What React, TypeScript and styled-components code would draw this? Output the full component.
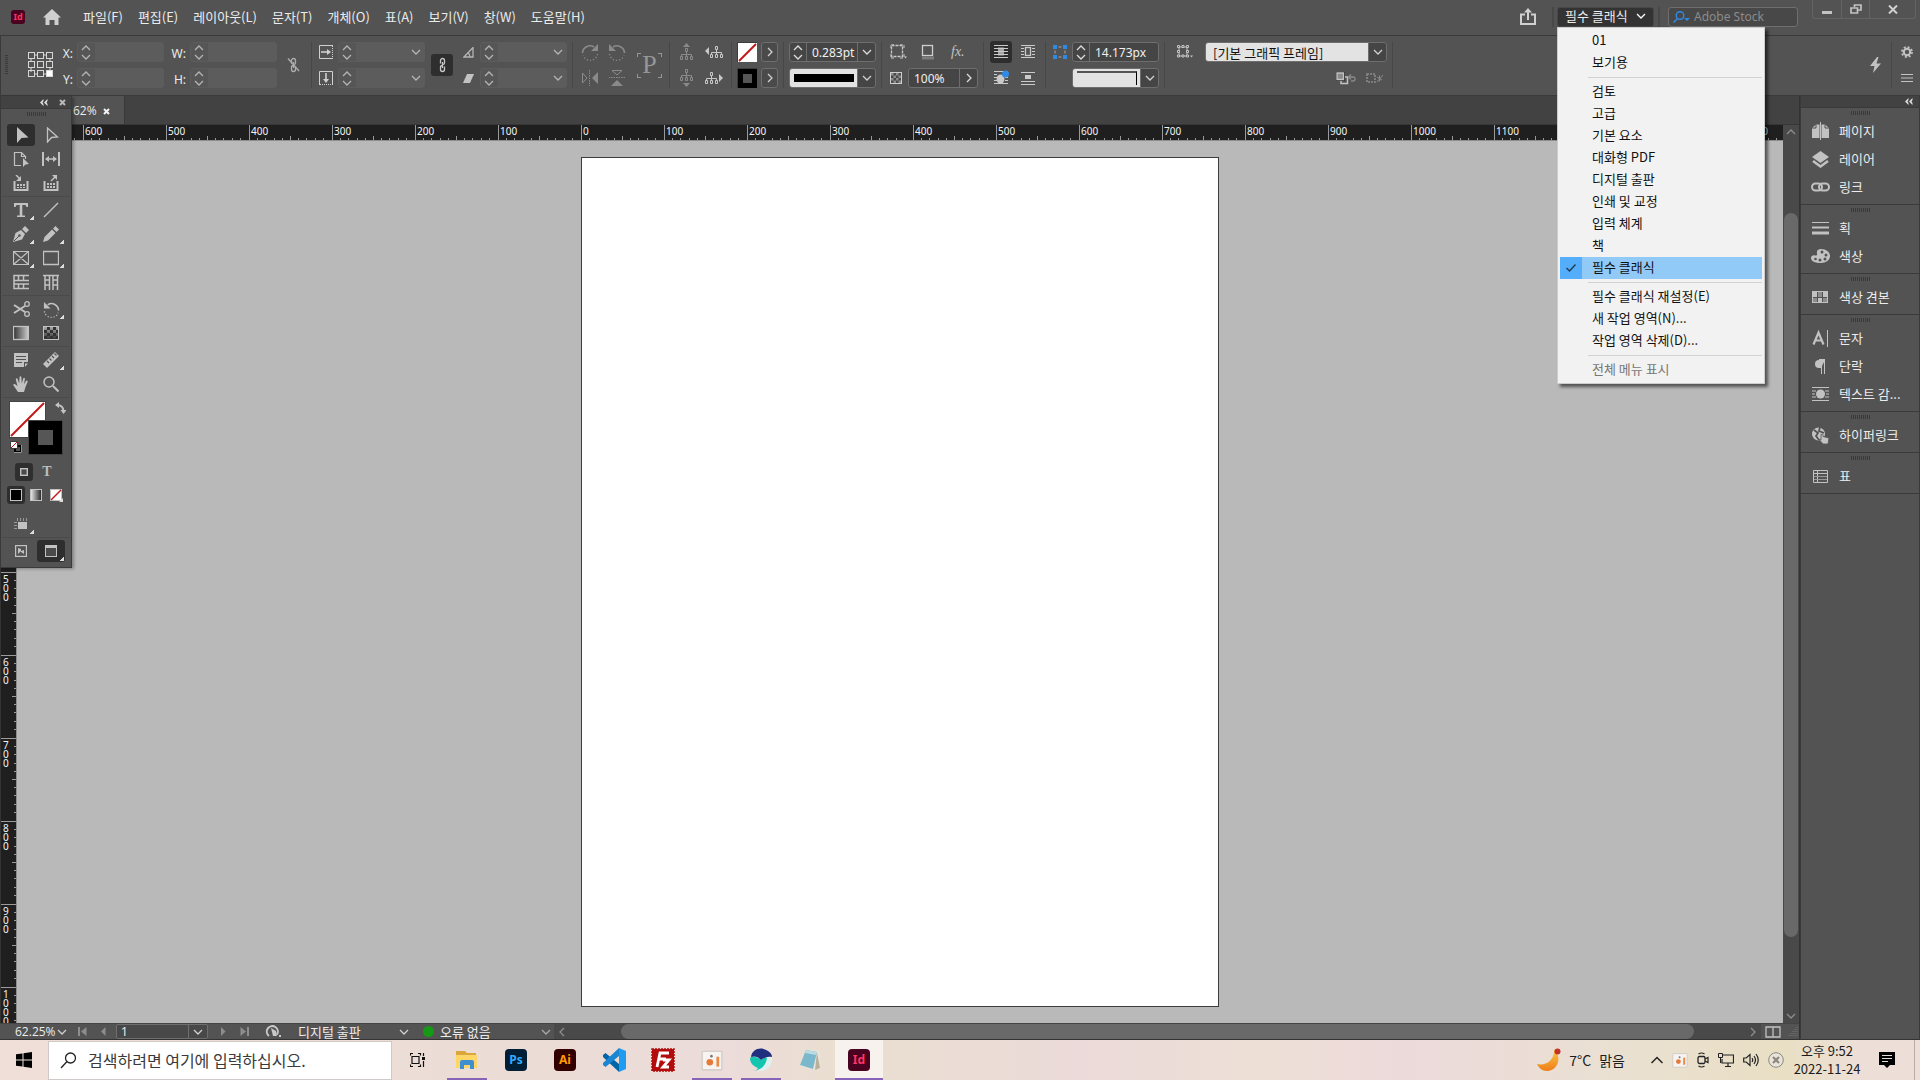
import React from "react";
import styled, { createGlobalStyle } from "styled-components";

const latin = `"Noto Sans", "Noto Sans CJK KR", sans-serif`;
const hangul = `"Noto Sans CJK KR", "Noto Sans", sans-serif`;

const c = {
  panel: "#535353",
  dark: "#424242",
  line: "#3a3a3a",
  soft: "#484848",
  field: "#454545",
  edge: "#6e6e6e",
  off: "#5c5c5c",
  text: "#ececec",
  icon: "#c2c2c2",
  dim: "#8a8a8a",
  pressed: "#2e2e2e",
  blue: "#2f8ae5",
};

const Global = createGlobalStyle`
  *, *::before, *::after { box-sizing: border-box; }
  html, body { margin: 0; overflow: hidden; }
  body { font: 13px/20px ${hangul}; color: ${c.text}; background: ${c.panel}; }
  button, input, select { font: inherit; color: inherit; margin: 0; padding: 0; border: 0; background: none; border-radius: 0; min-width: 0; outline: none; }
  button { display: inline-flex; align-items: center; justify-content: center; }
  select { appearance: none; }
  svg { display: block; flex: none; }
  ul { list-style: none; margin: 0; padding: 0; }
`;

/* ---------- icons ---------- */

type IconProps = { w?: number; h?: number; box?: string; color?: string; children: React.ReactNode };
const Icon = ({ w = 16, h = 16, box, color = c.icon, children }: IconProps) => (
  <svg width={w} height={h} viewBox={box ?? `0 0 ${w} ${h}`} fill="none" stroke={color} color={color} aria-hidden="true">
    {children}
  </svg>
);
const solid = { fill: "currentColor", stroke: "none" };

const Chevron = ({ dir = "down", color = "#d0d0d0" }: { dir?: string; color?: string }) => {
  const d: Record<string, string> = {
    down: "M1 3l4 4 4-4",
    up: "M1 7l4-4 4 4",
    right: "M3 1l4 4-4 4",
    left: "M7 1L3 5l4 4",
  };
  return (
    <Icon w={10} h={10} color={color}>
      <path d={d[dir]} strokeWidth="1.3" />
    </Icon>
  );
};

const DoubleLeft = () => (
  <Icon w={8} h={7} color="#dcdcdc">
    <path d="M3.5 0L0 3.5 3.5 7V5L2.5 3.5l1-1.500zM7.500 0L4 3.500 7.500 7V5l-1-1.500 1-1.500z" {...solid} />
  </Icon>
);

const Cross = ({ color = "#e0e0e0" }: { color?: string }) => (
  <Icon w={7} h={7} color={color}>
    <path d="M1 1l5 5M6 1L1 6" strokeWidth="2" />
  </Icon>
);

const RefGrid = () => (
  <Icon w={25} h={26} color="#d6d6d6">
    <path d="M6 3h4M15 3h4M3 6v4M3 15v5M22 6v4M22 15v5M6 22h4M15 22h4" />
    {[0, 1, 2].map((r) =>
      [0, 1, 2].map((k) => (
        <rect key={`${r}${k}`} x={0.5 + k * 9} y={0.5 + r * 9} width="6" height="6" fill={r === 2 && k === 2 ? "#fff" : "none"} />
      ))
    )}
  </Icon>
);

const Tree = ({ way, color }: { way: "up" | "down" | "left" | "right"; color: string }) => {
  const side = way === "left" || way === "right";
  const x = way === "left" ? 5 : 0;
  const y = way === "up" ? 5 : way === "down" ? 0 : 3;
  const arrow = { up: "M3 4h7L6.500 0z", down: "M3 14h7l-3.500 4z", left: "M4 4v8L0 8z", right: "M14 5v8l4-4z" }[way];
  return (
    <Icon w={side ? 18 : 13} h={18} color={color}>
      <g transform={`translate(${x} ${y})`}>
        <path d="M5.500.5h2v3h-2zM.5 8.500h2v3h-2zM5.500 8.500h2v3h-2zM10.500 8.500h2v3h-2zM6.500 4v4M1.500 8V6.500h10V8" />
      </g>
      <path d={arrow} {...solid} />
    </Icon>
  );
};

const Rotate = ({ flip, color = c.dim, size = 18 }: { flip?: boolean; color?: string; size?: number }) => (
  <Icon w={size} h={size} box="0 0 18 18" color={color}>
    <g transform={flip ? "translate(18 0) scale(-1 1)" : undefined}>
      <path d="M1.500 10A7.500 7.500 0 0 1 13 4" strokeWidth="1.600" />
      <path d="M17 1v7h-7z" {...solid} />
      <path d="M16.500 11A7.500 7.500 0 0 1 2 12.500" strokeWidth="1.400" strokeDasharray="1.200 2" />
    </g>
  </Icon>
);

const Mirror = ({ vertical }: { vertical?: boolean }) => (
  <Icon w={18} h={18} color={c.dim}>
    <g transform={vertical ? "rotate(90 9 9)" : undefined}>
      <path d="M1.500 4v10L6 9z" />
      <path d="M17 3v12l-6-6z" {...solid} />
      <path d="M8.500 1v16" strokeDasharray="1.500 1" />
    </g>
  </Icon>
);

const Wrap = ({ kind }: { kind: "none" | "box" | "shape" | "jump" }) => (
  <Icon w={16} h={16} color="#cacaca">
    {kind === "jump" ? (
      <>
        <path d="M1 2.500h14M1 11.500h14M1 14.500h14" />
        <path d="M5 5h6v4H5z" {...solid} />
      </>
    ) : (
      <>
        <path d="M1 1.500h14M1 13.500h14" />
        <path d={kind === "none" ? "M1 4.500h14M1 7.500h14M1 10.500h14" : "M1 4.500h3M1 7.500h3M1 10.500h3M12 4.500h3M12 7.500h3M12 10.500h3"} />
      </>
    )}
    {kind === "none" && <path d="M5 3.500h6v8H5z" fill="#a8a8a8" stroke="none" />}
    {kind === "none" && <path d="M1 4.500h14M1 7.500h14M1 10.500h14" />}
    {kind === "box" && <rect x="5.500" y="3.500" width="5" height="8" strokeWidth="1.300" />}
    {kind === "shape" && (
      <>
        <ellipse cx="7.500" cy="9" rx="4" ry="4.500" {...solid} />
        <circle cx="12.500" cy="4" r="3.500" fill={c.blue} stroke="none" />
      </>
    )}
  </Icon>
);

const Chain = ({ broken, color = "#c8c8c8" }: { broken?: boolean; color?: string }) => (
  <Icon w={13} h={16} color={color}>
    <path d="M4.500 6.500V3.500a2 2 0 0 1 4 0V6q0 1.500-2 1.500M8.500 9.500v3a2 2 0 0 1-4 0V10q0-1.500 2-1.500M6.500 5v6" strokeWidth="1.300" />
    {broken && <path d="M1 1.500l11 12.500" strokeWidth="1.300" />}
  </Icon>
);

const Checker = ({ size = 12 }: { size?: number }) => (
  <Icon w={size} h={size} box="0 0 12 12" color="#cfcfcf">
    <rect x=".5" y=".5" width="11" height="11" fill="#4a4a4a" />
    <path d="M1 1h2.500v2.500H1zM6 1h2.500v2.500H6zM3.500 3.500H6V6H3.500zM8.500 3.500H11V6H8.500zM1 6h2.500v2.500H1zM6 6h2.500v2.500H6zM3.500 8.500H6V11H3.500zM8.500 8.500H11V11H8.500z" fill="#8c8c8c" stroke="none" />
  </Icon>
);

const NoneSwatch = ({ size, line = 1.5 }: { size: number; line?: number }) => (
  <svg width={size} height={size} viewBox={`0 0 ${size} ${size}`} aria-hidden="true">
    <rect width={size} height={size} fill="#fff" />
    <path d={`M1 ${size - 1}L${size - 1} 1`} stroke="#c31717" strokeWidth={line} />
  </svg>
);

const StrokeSwatch = ({ size, hole }: { size: number; hole: number }) => (
  <svg width={size} height={size} viewBox={`0 0 ${size} ${size}`} aria-hidden="true">
    <rect width={size} height={size} fill="#000" />
    <rect x={(size - hole) / 2} y={(size - hole) / 2} width={hole} height={hole} fill="#565656" />
  </svg>
);

const AdobeBadge = ({ label, bg, fg, size = 18 }: { label: string; bg: string; fg: string; size?: number }) => (
  <Badge $bg={bg} $fg={fg} $size={size}>
    {label}
  </Badge>
);
const Badge = styled.span<{ $bg: string; $fg: string; $size: number }>`
  display: inline-flex;
  align-items: center;
  justify-content: center;
  flex: none;
  width: ${(p) => p.$size}px;
  height: ${(p) => p.$size}px;
  border-radius: ${(p) => (p.$size > 18 ? 4 : 3)}px;
  background: ${(p) => p.$bg};
  color: ${(p) => p.$fg};
  font: 700 ${(p) => (p.$size > 18 ? 12 : 9)}px/1 ${latin};
`;

/* ---------- menu bar ---------- */

const Screen = styled.div`
  display: flex;
  flex-direction: column;
  height: 100vh;
  background: ${c.panel};
`;
const MenuBar = styled.header`
  display: flex;
  align-items: center;
  height: 36px;
  flex: none;
  padding: 0 4px 2px 11px;
  border-bottom: 1px solid ${c.line};
`;
const HomeButton = styled.button`
  margin: 0 22px 0 18px;
`;
const Menus = styled.nav`
  display: flex;
  gap: 15px;
  flex: 1;
`;
const MenuButton = styled.button`
  line-height: 20px;
  white-space: nowrap;
`;
const Divider = styled.span`
  width: 2px;
  height: 20px;
  background: ${c.soft};
`;
const Workspace = styled.div`
  position: relative;
  margin: 0 4px 0 3px;
`;
const WorkspaceButton = styled.button`
  width: 97px;
  height: 20px;
  justify-content: space-between;
  padding: 0 7px 2px 7px;
  border-radius: 3px;
  background: #333;
  border: 1px solid #474747;
  line-height: 16px;
  white-space: nowrap;
`;
const SearchBox = styled.label`
  display: flex;
  align-items: center;
  gap: 4px;
  width: 130px;
  height: 20px;
  margin: 0 14px 0 8px;
  padding-left: 4px;
  border: 1px solid ${c.edge};
  border-radius: 3px;
  background: #484848;
  input {
    flex: 1;
    font: 12px/16px ${latin};
    &::placeholder { color: #8b8b8b; opacity: 1; }
  }
`;
const WindowButtons = styled.div`
  display: flex;
  align-self: flex-start;
  height: 19px;
  border: 1px solid #646464;
  border-top: 0;
  border-radius: 0 0 3px 3px;
  button { width: 28px; }
  button + button { border-left: 1px solid #646464; }
  button:last-child { width: 46px; }
`;

/* ---------- workspace menu ---------- */

const Popup = styled.ul`
  position: absolute;
  z-index: 20;
  top: 21px;
  left: 0;
  width: 208px;
  padding: 2px;
  border: 1px solid #ccc;
  background: #f2f2f2;
  box-shadow: 3px 3px 3px rgba(0, 0, 0, 0.55);
  color: #111;
`;
const PopupItem = styled.li`
  height: 22px;
`;
const PopupButton = styled.button<{ $on?: boolean; $faded?: boolean }>`
  display: grid;
  grid-template-columns: 22px 1fr;
  justify-content: stretch;
  align-items: start;
  width: 100%;
  height: 22px;
  gap: 10px;
  text-align: left;
  line-height: 20px;
  white-space: nowrap;
  color: ${(p) => (p.$faded ? "#777" : "#111")};
  background: ${(p) => (p.$on ? "#91c9f7" : "none")};
`;
const CheckCell = styled.span<{ $on?: boolean }>`
  display: flex;
  align-items: center;
  justify-content: center;
  height: 22px;
  background: ${(p) => (p.$on ? "#55aefb" : "none")};
`;
const PopupLine = styled.li`
  height: 7px;
  padding: 3px 0 3px 28px;
  &::before { content: ""; display: block; height: 1px; background: #d2d2d2; }
`;

/* ---------- control bar ---------- */

const ControlBar = styled.section`
  display: flex;
  height: 60px;
  flex: none;
  padding: 6px 7px 7px 0;
  border-bottom: 1px solid ${c.line};
  border-left: 1px solid ${c.line};
`;
const Group = styled.div<{ $l: number; $r?: number }>`
  display: flex;
  align-items: center;
  flex: none;
  padding-left: ${(p) => p.$l}px;
  padding-right: ${(p) => p.$r ?? 5}px;
  border-right: 1px solid #474747;
`;
const Rows = styled.div<{ $gap?: number; $ml?: number }>`
  display: flex;
  flex-direction: column;
  gap: 6px;
  margin-left: ${(p) => p.$ml ?? 0}px;
  > * { display: flex; align-items: center; gap: ${(p) => p.$gap ?? 0}px; height: 20px; }
`;
const Line = styled.div<{ $end?: boolean }>`
  justify-content: ${(p) => (p.$end ? "flex-end" : "flex-start")};
  padding-right: ${(p) => (p.$end ? 4 : 0)}px;
`;
const AxisLabel = styled.label<{ $w: number }>`
  width: ${(p) => p.$w}px;
  height: 20px;
  padding: 2px 4px 0 0;
  text-align: right;
  font: 12px/20px ${latin};
`;
const FieldBox = styled.span<{ $w: number; $off?: boolean }>`
  display: flex;
  width: ${(p) => p.$w}px;
  height: 20px;
  overflow: hidden;
  border-radius: 3px;
  border: 1px solid ${(p) => (p.$off ? c.off : c.edge)};
  background: ${(p) => (p.$off ? c.off : c.field)};
  input, select {
    flex: 1;
    width: 0;
    padding: 2px 0 0 5px;
    font: 12px/16px ${latin};
    color: #f0f0f0;
  }
`;
const Spin = styled.button<{ $off?: boolean }>`
  flex-direction: column;
  width: 17px;
  background: ${(p) => (p.$off ? "#565656" : "none")};
  border-right: 1px solid ${(p) => (p.$off ? "#565656" : c.edge)};
  svg + svg { margin-top: -1px; }
`;
const Drop = styled.button<{ $off?: boolean }>`
  width: 18px;
  border-left: 1px solid ${(p) => (p.$off ? c.off : c.edge)};
`;
const Light = styled.span`
  flex: 1;
  display: flex;
  align-items: center;
  padding: 0 3px 0 4px;
  background: #e3e3e3;
`;
const WeightLine = styled.span`
  flex: 1;
  height: 8px;
  background: #000;
`;
const CornerLine = styled.span`
  flex: 1;
  height: 14px;
  border-top: 2px solid #555;
  border-right: 1px solid #000;
`;
const StyleSelect = styled.select`
  && {
    background: #e3e3e3;
    color: #111;
    padding-left: 7px;
    font: 13px/16px ${hangul};
  }
`;
const Pressed = styled.button<{ $on?: boolean }>`
  width: 22px;
  height: 22px;
  flex: none;
  border-radius: 3px;
  background: ${(p) => (p.$on ? c.pressed : "none")};
`;
const SmallButton = styled.button`
  width: 17px;
  height: 20px;
  margin-left: 4px;
  border: 1px solid ${c.edge};
  border-radius: 3px;
  background: #4a4a4a;
`;
const SwatchFrame = styled.button`
  width: 20px;
  height: 20px;
  border: 1px solid #3c3c3c;
`;
const Gap = styled.span<{ $w: number }>`
  width: ${(p) => p.$w}px;
  flex: none;
`;
const Spacer = styled.span`
  flex: 1;
`;
const BarGrip = styled.span`
  width: 3px;
  height: 20px;
  margin-right: 20px;
  background: repeating-linear-gradient(#3a3a3a 0 1px, transparent 1px 2px);
`;
const FxText = styled.i`
  font: italic 14px/16px "Liberation Serif", serif;
  color: ${c.icon};
`;
const Stock = styled.span`
  font: 26px/24px "Liberation Serif", serif;
  color: #969696;
`;
const Bracketed = styled.span`
  display: grid;
  place-items: center;
  width: 25px;
  height: 25px;
  background:
    linear-gradient(#969696 0 0) 0 0 / 4px 1px, linear-gradient(#969696 0 0) 0 0 / 1px 4px,
    linear-gradient(#969696 0 0) 100% 0 / 4px 1px, linear-gradient(#969696 0 0) 100% 0 / 1px 4px,
    linear-gradient(#969696 0 0) 0 100% / 4px 1px, linear-gradient(#969696 0 0) 0 100% / 1px 4px,
    linear-gradient(#969696 0 0) 100% 100% / 4px 1px, linear-gradient(#969696 0 0) 100% 100% / 1px 4px;
  background-repeat: no-repeat;
`;

type FieldProps = { id?: string; label: string; value?: string; spin?: boolean; drop?: "down" | "right"; off?: boolean; w?: number };
const Field = ({ id, label, value = "", spin, drop, off, w = 87 }: FieldProps) => {
  const tone = off ? "#b4b4b4" : "#dcdcdc";
  return (
    <FieldBox $w={w} $off={off}>
      {spin && (
        <Spin $off={off} aria-label={`${label} 조정`}>
          <Chevron dir="up" color={tone} />
          <Chevron color={tone} />
        </Spin>
      )}
      <input id={id} aria-label={id ? undefined : label} defaultValue={value} disabled={off} />
      {drop && (
        <Drop $off={off} aria-label={`${label} 목록`}>
          <Chevron dir={drop} color={tone} />
        </Drop>
      )}
    </FieldBox>
  );
};

/* ---------- document area ---------- */

const Work = styled.div`
  display: flex;
  flex: 1;
  min-height: 0;
  position: relative;
`;
const Main = styled.main`
  display: flex;
  flex-direction: column;
  flex: 1;
  min-width: 0;
  border-right: 1px solid #333;
`;
const Tabs = styled.div`
  height: 29px;
  flex: none;
  background: ${c.dark};
  border-bottom: 1px solid #363636;
`;
const Tab = styled.div`
  display: flex;
  align-items: center;
  gap: 6px;
  width: 125px;
  height: 28px;
  padding: 2px 0 0 73px;
  background: ${c.panel};
  border-right: 1px solid #383838;
  font: 12px/20px "Open Sans", sans-serif;
`;
const Stage = styled.div`
  display: flex;
  flex: 1;
  min-height: 0;
`;
const Sheet = styled.div`
  display: flex;
  flex-direction: column;
  flex: 1;
  min-width: 0;
`;
const RulerX = styled.div`
  display: flex;
  height: 16px;
  flex: none;
  overflow: hidden;
  background: #1f1f1f;
  border-bottom: 1px solid #8d8d8d;
`;
const UnitX = styled.div`
  display: flex;
  flex: none;
  width: 83px;
  align-items: flex-end;
  position: relative;
  border-left: 1px solid #9a9a9a;
`;
const TickX = styled.i<{ $long?: boolean }>`
  flex: 1;
  height: ${(p) => (p.$long ? 4 : 2)}px;
  border-right: 1px solid #9a9a9a;
  &:last-of-type { border-color: transparent; }
`;
const MarkX = styled.span`
  position: absolute;
  left: 1px;
  top: 1px;
  font: 10px/11px ${latin};
  color: #f4f4f4;
`;
const Lower = styled.div`
  display: flex;
  flex: 1;
  min-height: 0;
`;
const RulerY = styled.div`
  width: 17px;
  flex: none;
  overflow: hidden;
  padding-top: 16px;
  background: #1f1f1f;
  border-right: 1px solid #8d8d8d;
  border-left: 1px solid #333;
`;
const UnitY = styled.div`
  display: flex;
  flex-direction: column;
  align-items: flex-end;
  height: 83px;
  position: relative;
  border-top: 1px solid #9a9a9a;
`;
const TickY = styled.i<{ $long?: boolean }>`
  flex: 1;
  width: ${(p) => (p.$long ? 4 : 2)}px;
  border-bottom: 1px solid #9a9a9a;
  &:last-of-type { border-color: transparent; }
`;
const MarkY = styled.span`
  position: absolute;
  left: 2px;
  top: 2px;
  width: 6px;
  font: 10px/9px ${latin};
  color: #f4f4f4;
  word-break: break-all;
`;
const Canvas = styled.div`
  display: flex;
  align-items: center;
  justify-content: center;
  flex: 1;
  min-width: 0;
  overflow: hidden;
  background: #b9b9b9;
`;
const Page = styled.div`
  width: 638px;
  height: 850px;
  flex: none;
  background: #fff;
  border: 1px solid #3d3d3d;
`;
const ScrollY = styled.div`
  display: flex;
  flex-direction: column;
  align-items: center;
  width: 16px;
  flex: none;
  padding: 2px 0;
  background: #494949;
`;
const ThumbY = styled.div`
  flex: 726;
  width: 14px;
  border-radius: 7px;
  background: #696969;
`;
const Fill = styled.span<{ $n: number }>`
  flex: ${(p) => p.$n};
`;

/* ---------- status bar ---------- */

const Status = styled.footer`
  display: flex;
  align-items: center;
  height: 17px;
  flex: none;
  border-top: 1px solid #444;
  border-bottom: 1px solid #333;
  padding-left: 15px;
  white-space: nowrap;
`;
const ZoomSelect = styled.label`
  display: flex;
  align-items: center;
  width: 55px;
  margin-right: 7px;
  select {
    width: 42px;
    font: 12px/15px "Open Sans", sans-serif;
  }
`;
const PageSelect = styled.span`
  display: flex;
  width: 92px;
  height: 15px;
  margin: 0 9px 0 9px;
  border: 1px solid ${c.edge};
  border-radius: 2px;
  background: #484848;
  input { flex: 1; padding-left: 4px; font: 12px/13px ${latin}; }
  button { width: 19px; border-left: 1px solid ${c.edge}; }
`;
const StatusSelect = styled.label<{ $w: number }>`
  display: flex;
  align-items: center;
  width: ${(p) => p.$w}px;
  select { flex: 1; line-height: 15px; height: 15px; }
`;
const Nav = styled.button`
  width: 10px;
  height: 15px;
`;
const Dot = styled.span`
  width: 11px;
  height: 11px;
  margin: 0 6px 0 14px;
  border-radius: 50%;
  background: #169a16;
`;
const ScrollX = styled.div`
  display: flex;
  align-items: center;
  flex: 1;
  height: 15px;
  margin-left: 3px;
  padding: 0 3px;
  background: #494949;
`;
const ThumbX = styled.div`
  flex: 1075;
  height: 15px;
  border-radius: 8px;
  background: #696969;
`;

/* ---------- tools panel ---------- */

const Tools = styled.aside`
  position: absolute;
  z-index: 10;
  left: 0;
  top: 0;
  width: 72px;
  padding-bottom: 3px;
  background: ${c.panel};
  border: 1px solid ${c.line};
  border-top: 0;
  box-shadow: 2px 1px 3px rgba(0, 0, 0, 0.3);
`;
const ToolsHead = styled.div`
  display: flex;
  align-items: center;
  justify-content: flex-end;
  gap: 11px;
  height: 13px;
  padding-right: 5px;
  background: ${c.dark};
  border-bottom: 1px solid ${c.line};
`;
const Grip = styled.div<{ $h: number }>`
  display: flex;
  justify-content: center;
  height: ${(p) => p.$h}px;
  padding-top: 3px;
  &::before {
    content: "";
    width: 19px;
    height: 4px;
    background: repeating-linear-gradient(90deg, #3a3a3a 0 1px, transparent 1px 2px);
  }
`;
const ToolGroup = styled.div`
  display: grid;
  grid-template-columns: 28px 28px;
  gap: 2px;
  margin: 0 1px;
  padding: 0 0 2px 5px;
  & + & { border-top: 1px solid #4a4a4a; padding-top: 2px; }
`;
const Tool = styled.button<{ $on?: boolean; $more?: boolean }>`
  height: 22px;
  border-radius: 3px;
  background: ${(p) =>
    p.$more
      ? `linear-gradient(135deg, transparent 50%, #dcdcdc 50%) calc(100% - 1px) calc(100% - 1px) / 4px 4px no-repeat ${p.$on ? c.pressed : "transparent"}`
      : p.$on
      ? c.pressed
      : "none"};
`;
const SwatchArea = styled.div`
  position: relative;
  height: 66px;
  margin: 0 1px;
  border-top: 1px solid #4a4a4a;
`;
const At = styled.button<{ $x: number; $y: number; $edge?: boolean }>`
  position: absolute;
  left: ${(p) => p.$x}px;
  top: ${(p) => p.$y}px;
  border: ${(p) => (p.$edge ? "1px solid #444" : "0")};
`;
const ModeRow = styled.div<{ $l: number; $gap: number; $b: number }>`
  display: flex;
  gap: ${(p) => p.$gap}px;
  padding: 0 0 ${(p) => p.$b}px ${(p) => p.$l}px;
`;
const Mode = styled.button<{ $on?: boolean }>`
  width: 18px;
  height: 18px;
  border-radius: 3px;
  background: ${(p) => (p.$on ? c.pressed : "none")};
`;
const SerifT = styled.b`
  font: 700 14px/16px "Liberation Serif", serif;
  color: #bdbdbd;
`;

/* ---------- dock ---------- */

const Dock = styled.aside`
  width: 120px;
  flex: none;
  border-left: 1px solid ${c.line};
  border-right: 1px solid ${c.line};
  border-bottom: 1px solid #333;
`;
const DockHead = styled.div`
  display: flex;
  align-items: center;
  justify-content: flex-end;
  height: 11px;
  padding-right: 6px;
  background: ${c.dark};
`;
const DockGroup = styled.div`
  padding-bottom: 3px;
  border-top: 1px solid ${c.line};
  &:last-child { border-bottom: 1px solid ${c.line}; }
`;
const DockItem = styled.button`
  display: flex;
  justify-content: flex-start;
  gap: 9px;
  width: 100%;
  height: 28px;
  padding-left: 10px;
  white-space: nowrap;
`;

/* ---------- taskbar ---------- */

const Taskbar = styled.footer`
  display: flex;
  align-items: center;
  height: 40px;
  flex: none;
  padding-right: 5px;
  color: #1c1c1c;
  background: linear-gradient(90deg, #efdfd8 0, #ecdcd6 28%, #ecdcda 38%, #eadfd0 44%, #ebdad9 56%, #eedfd6 66%, #ecdadb 73%, #eae0d2 84%, #e9dfc4 93%, #eddfd8 97%);
`;
const StartButton = styled.button`
  width: 48px;
  height: 40px;
`;
const TaskSearch = styled.label`
  display: flex;
  align-items: center;
  gap: 11px;
  width: 344px;
  height: 39px;
  padding-left: 11px;
  background: #fff;
  border: 1px solid #cfcac8;
  input {
    flex: 1;
    font: 16px/24px ${hangul};
    &::placeholder { color: #3a3a3a; opacity: 1; }
  }
`;
const Apps = styled.div`
  display: flex;
  gap: 1px;
  flex: 1;
  padding-left: 2px;
`;
const AppButton = styled.button<{ $line?: number; $on?: boolean }>`
  width: 48px;
  height: 40px;
  background: ${(p) => (p.$on ? "linear-gradient(#8764b8 0 0) 50% 100% / 48px 2px no-repeat, #f7f2ee" : p.$line ? `linear-gradient(#8764b8 0 0) 50% 100% / ${p.$line}px 2px no-repeat` : "none")};
`;
const Weather = styled.button`
  gap: 8px;
  margin-right: 26px;
  font-size: 14px;
`;
const Tray = styled.div`
  display: flex;
  align-items: center;
  gap: 9px;
`;
const Clock = styled.time`
  width: 72px;
  margin: 0 16px 0 7px;
  text-align: center;
  font: 13px/18px ${hangul};
`;
const EdgeLine = styled.span`
  width: 1px;
  height: 40px;
  margin-left: 19px;
  background: #b9aeab;
`;

/* ---------- data ---------- */

const menus = ["파일(F)", "편집(E)", "레이아웃(L)", "문자(T)", "개체(O)", "표(A)", "보기(V)", "창(W)", "도움말(H)"];
const workspaceMenu: string[][] = [
  ["01", "보기용"],
  ["검토", "고급", "기본 요소", "대화형 PDF", "디지털 출판", "인쇄 및 교정", "입력 체계", "책", "필수 클래식"],
  ["필수 클래식 재설정(E)", "새 작업 영역(N)...", "작업 영역 삭제(D)..."],
  ["전체 메뉴 표시"],
];
const unitsX = [700, 600, 500, 400, 300, 200, 100, 0, 100, 200, 300, 400, 500, 600, 700, 800, 900, 1000, 1100, 1200, 1300, 1400];
const unitsY = [0, 100, 200, 300, 400, 500, 600, 700, 800, 900, 1000];
const ticks = Array.from({ length: 10 }, (_, i) => i);

type ToolDef = { name: string; on?: boolean; more?: boolean; icon: React.ReactNode };
const toolGroups: ToolDef[][] = [
  [
    { name: "선택", on: true, icon: <Icon><path d="M4 0v16l4.500-5 7-.5z" {...solid} /></Icon> },
    { name: "직접 선택", icon: <Icon><path d="M4.500 1v14l4-4.500 6-.5z" strokeWidth="1.300" /></Icon> },
    { name: "페이지", icon: <Icon><path d="M8 14.500H1.500v-13h7l4 4V8M8.500 1.500v4h4" strokeWidth="1.200" /><path d="M10 7v9l2.500-2.500 3.500-.5z" {...solid} /></Icon> },
    { name: "간격", icon: <Icon w={18}><path d="M1 1v14M17 1v14" strokeWidth="2" /><path d="M4 8h10" strokeWidth="1.500" /><path d="M3 8l4-3v6zM15 8l-4-3v6z" {...solid} /></Icon> },
    { name: "내용 수집", icon: <Icon><path d="M1.500 6v9h13V6" strokeWidth="2" /><path d="M4 9h2v2H4zM7 9h2v2H7zM10 9h2v2h-2zM4 12h2v1H4zM7 12h2v1H7zM10 12h2v1h-2zM8 1v5H3z" {...solid} /><path d="M3 0l4 4" strokeWidth="1.500" /></Icon> },
    { name: "내용 배치", icon: <Icon><path d="M1.500 6v9h13V6" strokeWidth="2" /><path d="M4 8h2v2H4zM7 8h2v2H7zM10 8h2v2h-2zM4 11h2v2H4zM7 11h2v2H7zM10 11h2v2h-2zM14 0v5L9 0z" {...solid} /><path d="M13 1L8 6" strokeWidth="1.500" /></Icon> },
  ],
  [
    { name: "문자", more: true, icon: <Icon><path d="M1 1h14v4h-1.500L12.500 3H9.300v10.500H12V15H4v-1.500h2.700V3H3.500l-1 2H1z" {...solid} /></Icon> },
    { name: "선", icon: <Icon><path d="M1 15L15 1" strokeWidth="1.500" /></Icon> },
    { name: "펜", more: true, icon: <Icon><path d="M0 16l2.500-9L8 4l4 4-3 5.500zM9 3l3-3 4 4-3 3z" {...solid} /><path d="M1 15l5-5" stroke={c.panel} /><circle cx="6.500" cy="9.500" r="1.200" fill={c.panel} stroke="none" /></Icon> },
    { name: "연필", more: true, icon: <Icon><path d="M0 16l1.500-5L9 3.500 12.500 7 5 14.500zM10 2.500L12.500 0 16 3.500 13.500 6z" {...solid} /></Icon> },
    { name: "사각형 프레임", more: true, icon: <Icon><path d="M.5 1.500h15v13H.5zM.5 1.500l15 13M15.500 1.500l-15 13" strokeWidth="1.200" /></Icon> },
    { name: "사각형", more: true, icon: <Icon><path d="M.5 1.500h15v13H.5z" strokeWidth="1.300" /></Icon> },
    { name: "가로 격자", icon: <Icon><path d="M16 1.500H1v13h15M1 6.500h15M1 10h15M5.500 1v5M10.500 1v5M5.500 10v5M10.500 10v5" strokeWidth="1.500" /></Icon> },
    { name: "세로 격자", icon: <Icon><path d="M0 1.500h16M2 1v15M6.500 1v15M10 1v15M14.500 1v15M2 6h4.500M2 11h4.500M10 6h4.500M10 11h4.500" strokeWidth="1.500" /></Icon> },
  ],
  [
    { name: "가위", icon: <Icon w={17}><path d="M1 4l11 7M1 12l11-7" strokeWidth="2" /><circle cx="14" cy="3" r="2.300" strokeWidth="1.300" /><circle cx="14" cy="13" r="2.300" strokeWidth="1.300" /></Icon> },
    { name: "회전", more: true, icon: <Rotate flip color={c.icon} size={17} /> },
    { name: "그라디언트 색상 견본", icon: <Icon><defs><linearGradient id="gs"><stop stopColor="#333" /><stop offset="1" stopColor="#ccc" /></linearGradient></defs><rect x=".5" y="1.500" width="15" height="13" fill="url(#gs)" strokeWidth="1.300" /></Icon> },
    { name: "그라디언트 페더", icon: <Icon><defs><linearGradient id="gf" x2="0" y2="1"><stop stopColor="#aaa" /><stop offset="1" stopColor="#333" /></linearGradient></defs><rect x=".5" y="1.500" width="15" height="13" fill="#333" /><path d="M1 2h3v3H1zM7 2h3v3H7zM13 2h2v3h-2zM4 5h3v3H4zM10 5h3v3h-3zM1 8h3v3H1zM7 8h3v3H7zM13 8h2v3h-2zM4 11h3v3H4zM10 11h3v3h-3z" fill="url(#gf)" stroke="none" /></Icon> },
  ],
  [
    { name: "메모", icon: <Icon><path d="M1 1h14v9h-4v5H1zM15 11.500L12 15v-3.500z" {...solid} /><path d="M3 4.500h10M3 7.500h10M3 10.500h6" stroke={c.panel} /></Icon> },
    { name: "측정", more: true, icon: <Icon><path d="M0 12L12 0l4 4L4 16z" {...solid} /><path d="M4 9l2 2M6.500 6.500l2 2M9 4l2 2M11.500 1.500l2 2" stroke={c.panel} strokeWidth="1.200" /></Icon> },
    { name: "손", icon: <Icon><path d="M5 16L.5 9.500c-.6-1.200.8-2 1.600-1.200L4.500 10 2.800 3.500c-.2-1.300 1.400-1.600 1.800-.5L6.200 7.500 6.500 1.200C6.600 0 8.300 0 8.400 1.200L8.800 7.400l1.400-5c.4-1.200 2-.8 1.700.5L11 8.200l2-3.300c.8-1 2.100-.2 1.600 1L12.500 11 11 16z" {...solid} /></Icon> },
    { name: "확대/축소", icon: <Icon><circle cx="6" cy="6" r="5" strokeWidth="1.500" /><path d="M10 10l5.500 5.500" strokeWidth="2" /></Icon> },
  ],
];

const dockGroups: { name: string; icon: React.ReactNode }[][] = [
  [
    { name: "페이지", icon: <Icon w={19} h={18}><path d="M1 16V6l4-3.500h3.500V16zM10.500 16V2.500H14L18 6v10z" {...solid} /><path d="M9.500 0v18" /><path d="M5 2.500V6H1M14 2.500V6h4" stroke={c.panel} /></Icon> },
    { name: "레이어", icon: <Icon w={19} h={18}><path d="M9.500 1L18 7l-8.500 6L1 7z" {...solid} /><path d="M2 11l7.500 5.500L17 11" strokeWidth="2.500" /></Icon> },
    { name: "링크", icon: <Icon w={19} h={18}><rect x="1" y="5.500" width="10" height="7" rx="3.500" strokeWidth="2" /><rect x="8" y="5.500" width="10" height="7" rx="3.500" strokeWidth="2" /></Icon> },
  ],
  [
    { name: "획", icon: <Icon w={19} h={18}><path d="M1 3.500h17" /><path d="M1 8.500h17" strokeWidth="2" /><path d="M1 14h17" strokeWidth="3" /></Icon> },
    { name: "색상", icon: <Icon w={19} h={18}><path d="M10 2c5 0 9 3 9 7s-4 7-9 7c-6 0-10-2-10-5 0-2 2-3 4-2.500 1.500.3 2.500-.5 2-2C5.300 4 7 2 10 2z" {...solid} /><g fill={c.panel} stroke="none"><circle cx="11" cy="5" r="1.500" /><circle cx="15" cy="8" r="1.500" /><circle cx="14" cy="12" r="1.500" /><circle cx="9" cy="13" r="1.500" /><circle cx="4.500" cy="12" r="1.300" /></g></Icon> },
  ],
  [{ name: "색상 견본", icon: <Icon w={19} h={18}><rect x="1.500" y="3.500" width="15" height="11" /><path d="M2 4h4v5H2zM12 4h4v5h-4zM7 10h4v4H7z" {...solid} /><path d="M7 4h4v5H7zM2 10h4v4H2zM12 10h4v4h-4z" fill="#8d8d8d" stroke="none" /></Icon> }],
  [
    { name: "문자", icon: <Icon w={19} h={18}><path d="M2.500 15.500L7.500 3.500l5 12M4.500 11.500h6" strokeWidth="2.200" /><path d="M16.500 1v17" /></Icon> },
    { name: "단락", icon: <Icon w={19} h={18}><path d="M14 3H8a4 4 0 0 0 0 8h2z" {...solid} /><path d="M10.500 3v14M13.500 3v14M8 2.500h6" /></Icon> },
    { name: "텍스트 감...", icon: <Icon w={19} h={18}><path d="M1 2.500h17M1 15.500h17M1 6h4M14 6h4M1 9h3M15 9h3M1 12h4M14 12h4" /><circle cx="9.500" cy="9" r="4.500" {...solid} /></Icon> },
  ],
  [{ name: "하이퍼링크", icon: <Icon w={19} h={18}><circle cx="7.500" cy="8" r="6.500" {...solid} /><path d="M3 4l4 3-2 3 3 4M9 1l-1 4 5 2" stroke={c.panel} strokeWidth="1.800" /><path d="M10 9v5l-2-.5 4 4.500h5l1-6-6-1.500V9a1 1 0 0 0-2 0z" fill="#c2c2c2" stroke={c.panel} strokeWidth=".8" /></Icon> }],
  [{ name: "표", icon: <Icon w={19} h={18}><path d="M2.500 3.500h14v12h-14zM2.500 6.500h14M6.500 4v11" /><path d="M3 9.500h13M3 12.500h13" stroke="#999" /></Icon> }],
];

const Bandicam = ({ size = 20 }: { size?: number }) => (
  <Icon w={size} h={size} box="0 0 20 20">
    <rect x="1" y="2" width="18" height="17" rx="1" fill="#f6f3f1" stroke="#cbc5c2" />
    <circle cx="8" cy="12" r="3" fill="#e57a37" stroke="none" />
    <path d="M14 7h2.500v9H14z" fill="#e98a48" stroke="none" />
    <circle cx="9.500" cy="6.500" r="1.200" fill="#777" stroke="none" />
  </Icon>
);

const apps: { name: string; line?: number; on?: boolean; icon: React.ReactNode }[] = [
  { name: "작업 보기", icon: <Icon w={16} h={16} color="#111"><path d="M2 4.500h7v7H2zM.5 1v2.500M10.500 1v2.500M.5 15v-2.500M10.500 15v-2.500M1 1.500h2M8 1.500h2M1 14.500h2M8 14.500h2M13.500 1v3M13.500 9v6" strokeWidth="1.200" /><path d="M12 5h3v3h-3z" {...solid} /></Icon> },
  { name: "파일 탐색기", line: 40, icon: <Icon w={24} h={20}><path d="M1 1h9l2 2h9v4H1z" fill="#dba73a" stroke="none" /><path d="M1 5h21v13H1z" fill="#fcd667" stroke="none" /><path d="M5 19v-7q0-2 2-2h10q2 0 2 2v7h-4v-4H9v4z" fill="#3f8fd0" stroke="none" /></Icon> },
  { name: "Photoshop", icon: <AdobeBadge label="Ps" bg="#001e36" fg="#31a8ff" size={22} /> },
  { name: "Illustrator", icon: <AdobeBadge label="Ai" bg="#330000" fg="#ff9a00" size={22} /> },
  { name: "Visual Studio Code", icon: <Icon w={24} h={24}><path d="M17 0l7 3v18l-7 3z" fill="#1f9cf0" stroke="none" /><path d="M1 7l2.500-2L17 16v8L1 9z" fill="#0065a9" stroke="none" /><path d="M1 17l2.500 2L17 8V0L1 15z" fill="#1a86d2" stroke="none" /></Icon> },
  { name: "FileZilla", icon: <Icon w={24} h={24}><rect x="1" y="1" width="22" height="22" fill="#b30c0c" stroke="#b30c0c" strokeWidth="1.500" strokeDasharray="2 1" /><path d="M6 19L9 5h9M7.500 11H15M12 12h6l-6 7h6" stroke="#fff" strokeWidth="2.800" /></Icon> },
  { name: "Bandicam", line: 40, icon: <Bandicam size={22} /> },
  { name: "Whale", line: 40, icon: <Icon w={24} h={24}><path d="M12 13c3-4 7-5 11-4 1 8-5 15-14 14z" fill="#dff0ee" stroke="none" /><path d="M1 10c2-2 7-2 11 2 2-2 4-3 6-2-1 6-4 12-14 13 3-1 4-1 5-3-5-2-8-5-8-10z" fill="#14c5b0" stroke="none" /><path d="M2 9C3 1 12-2 19 3c3 2 4 4 4 6-4-1-7 0-11 3C9 8 5 8 2 9z" fill="#20307f" stroke="none" /></Icon> },
  { name: "메모장", icon: <Icon w={24} h={24}><path d="M9 2l12 1 1 18-5 1-15-4z" fill="#e9e6df" stroke="none" /><path d="M8 2l11 2-4 17-13-4z" fill="#7cb8cb" stroke="none" /><path d="M8 2l11 2-1 3L7 5z" fill="#b9dbe4" stroke="none" /><path d="M19 4l3 16-5 2z" fill="#b9b09c" stroke="none" /></Icon> },
  { name: "InDesign", on: true, icon: <AdobeBadge label="Id" bg="#49021f" fg="#ff3366" size={22} /> },
];

/* ---------- sections ---------- */

const TopMenu = () => (
  <MenuBar>
    <AdobeBadge label="Id" bg="#49021f" fg="#ff3366" size={14} />
    <HomeButton aria-label="홈">
      <Icon w={18} h={16} color="#cfcfcf">
        <path d="M9 0l9 8.500h-2.500V16h-4v-5h-5v5h-4V8.500H0z" {...solid} />
      </Icon>
    </HomeButton>
    <Menus>
      {menus.map((m) => (
        <MenuButton key={m}>{m}</MenuButton>
      ))}
    </Menus>
    <button aria-label="공유">
      <Icon w={16} h={17} color="#d0d0d0">
        <path d="M5 6.500H1v9.500h14V6.500h-4" strokeWidth="2" />
        <path d="M8 12V3" strokeWidth="2" />
        <path d="M8 0l4 4.500H4z" {...solid} />
      </Icon>
    </button>
    <Gap $w={16} />
    <Divider />
    <Workspace>
      <WorkspaceButton aria-haspopup="menu" aria-expanded="true">
        필수 클래식
        <Chevron color="#fff" />
      </WorkspaceButton>
      <Popup role="menu">
        {workspaceMenu.map((block, i) => (
          <React.Fragment key={i}>
            {i > 0 && <PopupLine role="separator" />}
            {block.map((name) => {
              const on = name === "필수 클래식";
              return (
                <PopupItem key={name} role="none">
                  <PopupButton role="menuitem" $on={on} $faded={i === 3}>
                    <CheckCell $on={on}>
                      {on && (
                        <Icon w={10} h={8} color="#1d3a52">
                          <path d="M.5 4l3 3 6-6.500" strokeWidth="1.400" />
                        </Icon>
                      )}
                    </CheckCell>
                    {name}
                  </PopupButton>
                </PopupItem>
              );
            })}
          </React.Fragment>
        ))}
      </Popup>
    </Workspace>
    <Divider />
    <SearchBox>
      <Icon w={17} h={12} color={c.blue}>
        <circle cx="7" cy="4.500" r="3.800" strokeWidth="1.400" />
        <path d="M4.500 7.500L.5 11.500" strokeWidth="1.500" />
        <path d="M11 7h6l-3 3z" {...solid} />
      </Icon>
      <input placeholder="Adobe Stock" aria-label="Adobe Stock" />
    </SearchBox>
    <WindowButtons>
      <button aria-label="최소화">
        <Icon w={10} h={10}><path d="M0 8.500h10" strokeWidth="3" /></Icon>
      </button>
      <button aria-label="이전 크기로">
        <Icon w={12} h={10}><path d="M4.500 3V1h6.500v5H8M1 4h6.500v5H1z" strokeWidth="1.700" /></Icon>
      </button>
      <button aria-label="닫기">
        <Icon w={10} h={9} color="#d0d0d0"><path d="M1 .5l8 8M9 .5l-8 8" strokeWidth="2" /></Icon>
      </button>
    </WindowButtons>
  </MenuBar>
);

const ScaleIcon = ({ down }: { down?: boolean }) => (
  <Icon w={14} h={14} color="#cfcfcf">
    <path d={down ? "M.5 14V.5h13V14" : "M14 .5H.5v13H14"} />
    <path d={down ? "M1 13.500h12" : "M13.500 1v12"} strokeDasharray="1 1" />
    <g transform={down ? "rotate(90 7 7)" : undefined}>
      <path d="M2 7h8" strokeWidth="1.600" />
      <path d="M8 4l4 3-4 3z" {...solid} />
    </g>
  </Icon>
);

const Controls = () => (
  <ControlBar>
    <Group $l={4} $r={11}>
      <BarGrip />
      <RefGrid />
      <Rows $ml={2}>
        <Line><AxisLabel htmlFor="fx" $w={22}>X:</AxisLabel><Field id="fx" label="X" spin off /></Line>
        <Line><AxisLabel htmlFor="fy" $w={22}>Y:</AxisLabel><Field id="fy" label="Y" spin off /></Line>
      </Rows>
      <Rows>
        <Line><AxisLabel htmlFor="fw" $w={26}>W:</AxisLabel><Field id="fw" label="W" spin off /></Line>
        <Line><AxisLabel htmlFor="fh" $w={26}>H:</AxisLabel><Field id="fh" label="H" spin off /></Line>
      </Rows>
      <Gap $w={10} />
      <Chain broken color="#adadad" />
    </Group>
    <Group $l={7}>
      <Rows $gap={5}>
        <Line><ScaleIcon /><Field label="X 비율" spin drop="down" off /></Line>
        <Line><ScaleIcon down /><Field label="Y 비율" spin drop="down" off /></Line>
      </Rows>
      <Gap $w={6} />
      <Pressed $on aria-label="비율 제한"><Chain /></Pressed>
      <Rows $gap={6} $ml={10}>
        <Line>
          <Icon w={11} h={11} color="#b5b5b5"><path d="M10 .5v9.500H1zM5 5.500q2 2 2 4.500" strokeWidth="1.300" /></Icon>
          <Field label="회전 각도" spin drop="down" off />
        </Line>
        <Line>
          <Icon w={11} h={11}><path d="M4 1h7l-4 9H0z" {...solid} /></Icon>
          <Field label="기울이기" spin drop="down" off />
        </Line>
      </Rows>
    </Group>
    <Group $l={8} $r={7}>
      <Rows $gap={9}>
        <Line><Rotate /><Rotate flip /></Line>
        <Line><Mirror /><Mirror vertical /></Line>
      </Rows>
      <Gap $w={11} />
      <Bracketed><Stock>P</Stock></Bracketed>
    </Group>
    <Group $l={10} $r={8}>
      <Rows $gap={12}>
        <Line><Tree way="up" color={c.dim} /><Tree way="left" color="#c8c8c8" /></Line>
        <Line><Tree way="down" color={c.dim} /><Tree way="right" color="#c8c8c8" /></Line>
      </Rows>
    </Group>
    <Group $l={5}>
      <Rows>
        <Line>
          <SwatchFrame aria-label="칠"><NoneSwatch size={19} line={2} /></SwatchFrame>
          <SmallButton aria-label="칠 옵션"><Chevron dir="right" /></SmallButton>
        </Line>
        <Line>
          <SwatchFrame aria-label="획"><StrokeSwatch size={19} hole={9} /></SwatchFrame>
          <SmallButton aria-label="획 옵션"><Chevron dir="right" /></SmallButton>
        </Line>
      </Rows>
    </Group>
    <Group $l={5}>
      <Rows>
        <Line><Field label="획 두께" value="0.283pt" spin drop="down" /></Line>
        <Line>
          <FieldBox $w={87}>
            <Light><WeightLine /></Light>
            <Drop aria-label="획 유형"><Chevron /></Drop>
          </FieldBox>
        </Line>
      </Rows>
    </Group>
    <Group $l={8}>
      <Rows>
        <Line>
          <Icon w={17} h={16} color="#c8c8c8">
            <rect x="1.500" y="1.500" width="11" height="11" strokeDasharray="3 1" strokeWidth="1.300" />
            <path d="M0 4V1M4 0H1M10 0h3M14 1v3M14 10v3M13 14h-3M4 14H1M0 13v-3" />
            <path d="M14 12.500h3l-1.500 2z" {...solid} />
          </Icon>
          <Gap $w={14} />
          <Icon w={14} h={16} color="#d0d0d0"><rect x="1.500" y="1.500" width="10" height="10" strokeWidth="1.300" /><path d="M1 14h12" stroke="#7c7c7c" strokeWidth="3" /></Icon>
          <Gap $w={16} />
          <FxText>fx.</FxText>
        </Line>
        <Line>
          <Checker />
          <Gap $w={6} />
          <Field label="불투명도" value="100%" drop="right" w={70} />
        </Line>
      </Rows>
    </Group>
    <Group $l={6} $r={6}>
      <Rows $gap={5}>
        <Line>
          <Pressed $on aria-label="텍스트 감싸기 없음"><Wrap kind="none" /></Pressed>
          <Pressed aria-label="테두리 상자 감싸기"><Wrap kind="box" /></Pressed>
        </Line>
        <Line>
          <Pressed aria-label="개체 모양 감싸기"><Wrap kind="shape" /></Pressed>
          <Pressed aria-label="개체 건너뛰기"><Wrap kind="jump" /></Pressed>
        </Line>
      </Rows>
    </Group>
    <Group $l={7}>
      <Rows>
        <Line>
          <Icon w={14} h={14} color={c.blue}>
            <path d="M0 0h4v4H0zM10 0h4v4h-4zM0 10h4v4H0zM10 10h4v4h-4z" {...solid} />
            <path d="M5.500 2h3M5.500 12h3M2 5.500v3M12 5.500v3" stroke="#8a8a8a" strokeWidth="1.500" />
          </Icon>
          <Gap $w={5} />
          <Field label="모퉁이 크기" value="14.173px" spin />
        </Line>
        <Line>
          <Gap $w={19} />
          <FieldBox $w={87}>
            <Light><CornerLine /></Light>
            <Drop aria-label="모퉁이 모양"><Chevron /></Drop>
          </FieldBox>
        </Line>
      </Rows>
    </Group>
    <Group $l={12}>
      <Rows>
        <Line>
          <Icon w={16} h={14} color="#c4c4c4">
            <rect x="2" y="2" width="8" height="9" />
            <path d="M.5.5h2v2h-2zM5 .5h2v2H5zM9.500.5h2v2h-2zM.5 5.500h2v2h-2zM9.500 5.500h2v2h-2zM.5 10h2v2h-2zM5 10h2v2H5zM9.500 10h2v2h-2z" fill={c.panel} />
            <path d="M13 10.500h3L14.500 12.500z" {...solid} />
          </Icon>
          <Gap $w={12} />
          <FieldBox $w={182}>
            <StyleSelect aria-label="개체 스타일"><option>[기본 그래픽 프레임]</option></StyleSelect>
            <Drop aria-label="개체 스타일 목록"><Chevron /></Drop>
          </FieldBox>
        </Line>
        <Line $end>
          <Icon w={20} h={13}>
            <path d="M5 5h6.500v6.500H5z" strokeWidth="1.500" />
            <path d="M1 1h6.500v6.500H1z" fill="#a8a8a8" stroke="#2e2e2e" strokeWidth="3" />
            <path d="M1 1h6.500v6.500H1z" fill="#8a8a8a" strokeWidth="1.300" />
            <path d="M13 5h4q2 0 2 2t-2 2h-2M15 2.500L12.500 5 15 7.500" stroke={c.dim} strokeWidth="1.300" />
          </Icon>
          <Gap $w={10} />
          <Icon w={17} h={13} color={c.dim}><rect x="1" y="2" width="8" height="8" strokeWidth="1.600" strokeDasharray="2 1" /><path d="M11 10l6-7M11 5l5 3M13.500 3.500v6" /></Icon>
        </Line>
      </Rows>
    </Group>
    <Spacer />
    <Group $l={0} $r={10}>
      <Icon w={11} h={16}><path d="M7 0L0 9h4.500L3 16l8-9.500H6.500L8.500 0z" {...solid} /></Icon>
    </Group>
    <Rows $ml={9}>
      <button aria-label="설정">
        <Icon w={12} h={12}><circle cx="6" cy="6" r="3.200" strokeWidth="2" /><circle cx="6" cy="6" r="5" strokeWidth="1.800" strokeDasharray="2 1.930" /></Icon>
      </button>
      <button aria-label="패널 메뉴">
        <Icon w={12} h={8}><path d="M0 .5h12M0 4h12M0 7.500h12" /></Icon>
      </button>
    </Rows>
  </ControlBar>
);

const ToolsPanel = () => (
  <Tools>
    <ToolsHead>
      <DoubleLeft />
      <Cross color="#b8b8b8" />
    </ToolsHead>
    <Grip $h={15} />
    {toolGroups.map((g, i) => (
      <ToolGroup key={i}>
        {g.map((t) => (
          <Tool key={t.name} $on={t.on} $more={t.more} aria-label={t.name}>{t.icon}</Tool>
        ))}
      </ToolGroup>
    ))}
    <SwatchArea>
      <At $x={7} $y={3} $edge aria-label="칠"><NoneSwatch size={35} line={2} /></At>
      <At $x={26} $y={22} $edge aria-label="획"><StrokeSwatch size={33} hole={15} /></At>
      <At $x={53} $y={4} aria-label="칠과 획 교체">
        <Icon w={11} h={12}><path d="M2 3q6 0 6.500 6" strokeWidth="1.800" /><path d="M4 0v6L0 3zM5.500 8h6L8.500 12z" {...solid} /></Icon>
      </At>
      <At $x={8} $y={43} aria-label="기본 칠과 획">
        <Icon w={12} h={12}><path d="M5 5h6v6H5z" stroke="#000" strokeWidth="2" /><path d="M4 11.500h7.500V4" stroke="#bbb" strokeWidth=".8" /><path d="M.5.5h7v7h-7z" fill="#fff" stroke="#222" strokeWidth=".8" /><path d="M1 7l6-6" stroke="#c31717" /></Icon>
      </At>
    </SwatchArea>
    <ModeRow $l={14} $gap={5} $b={5}>
      <Mode $on aria-label="컨테이너에 서식 적용"><Icon w={8} h={8}><rect x=".7" y=".7" width="6.600" height="6.600" strokeWidth="1.400" fill="#4a4a4a" /></Icon></Mode>
      <Mode aria-label="텍스트에 서식 적용"><SerifT>T</SerifT></Mode>
    </ModeRow>
    <ModeRow $l={6} $gap={2} $b={9}>
      <Mode $on aria-label="색상 적용"><Icon w={12} h={12}><rect x=".5" y=".5" width="11" height="11" fill="#000" /></Icon></Mode>
      <Mode aria-label="그라디언트 적용"><Icon w={12} h={12}><defs><linearGradient id="gm"><stop stopColor="#eee" /><stop offset="1" stopColor="#222" /></linearGradient></defs><rect x=".5" y=".5" width="11" height="11" fill="url(#gm)" /></Icon></Mode>
      <Mode aria-label="없음 적용"><Icon w={14} h={14}><rect x="1.500" y="1.500" width="11" height="11" fill="#fff" /><path d="M2 12L12 2" stroke="#c31717" strokeWidth="1.500" /><path d="M14 10v4h-4z" fill="#ddd" stroke="none" /></Icon></Mode>
    </ModeRow>
    <ToolGroup>
      <Tool $more aria-label="보기 옵션">
        <Icon w={14} h={12}><path d="M4 4h9v7H4z" {...solid} /><path d="M0 4.500h3M0 7.500h3M0 10.500h3M3.500 0v3M6.500 0v3M9.500 0v3M12.500 0v3" stroke="#999" /></Icon>
      </Tool>
    </ToolGroup>
    <ToolGroup>
      <Tool aria-label="표준"><Icon w={12} h={12}><rect x=".5" y=".5" width="11" height="11" strokeWidth="1.400" /><path d="M3 3l3 1v3l3 2V5l-3 1-3 3z" {...solid} /></Icon></Tool>
      <Tool $on $more aria-label="미리 보기"><Icon w={12} h={12}><rect x=".5" y=".5" width="11" height="11" fill="#4a4a4a" /><path d="M0 1.500h12" strokeWidth="3" /></Icon></Tool>
    </ToolGroup>
  </Tools>
);

const StatusBar = () => (
  <Status>
    <ZoomSelect>
      <select aria-label="확대/축소 비율"><option>62.25%</option></select>
      <Chevron />
    </ZoomSelect>
    <Nav aria-label="첫 페이지"><Icon w={9} h={9} color="#8d8d8d"><path d="M1 0v9" strokeWidth="2" /><path d="M8.500 0v9L3 4.500z" {...solid} /></Icon></Nav>
    <Gap $w={10} />
    <Nav aria-label="이전 페이지"><Icon w={9} h={9} color="#8d8d8d"><path d="M7.500 0v9L3 4.500z" {...solid} /></Icon></Nav>
    <PageSelect>
      <input aria-label="페이지" defaultValue="1" />
      <button aria-label="페이지 목록"><Chevron /></button>
    </PageSelect>
    <Nav aria-label="다음 페이지"><Icon w={9} h={9} color="#8d8d8d"><path d="M3 0v9l4.500-4.500z" {...solid} /></Icon></Nav>
    <Gap $w={12} />
    <Nav aria-label="마지막 페이지"><Icon w={9} h={9} color="#8d8d8d"><path d="M8 0v9" strokeWidth="2" /><path d="M.5 0v9L6 4.500z" {...solid} /></Icon></Nav>
    <Gap $w={16} />
    <Icon w={17} h={13} color="#c8c8c8"><path d="M4 11A5.500 5.500 0 1 1 12 9.500" strokeWidth="2" /><path d="M6 3l5 3 1 5H8z" {...solid} /><path d="M14 10h2v2h-2z" {...solid} /></Icon>
    <Gap $w={16} />
    <StatusSelect $w={111}>
      <select aria-label="프리플라이트 프로필"><option>디지털 출판</option></select>
      <Chevron />
    </StatusSelect>
    <Dot />
    <StatusSelect $w={111}>
      <select aria-label="프리플라이트 상태"><option>오류 없음</option></select>
      <Chevron color="#a8a8a8" />
    </StatusSelect>
    <ScrollX>
      <Chevron dir="left" color="#8d8d8d" />
      <Fill $n={54} />
      <ThumbX />
      <Fill $n={54} />
      <Chevron dir="right" color="#8d8d8d" />
    </ScrollX>
    <Gap $w={4} />
    <button aria-label="레이아웃 분할"><Icon w={16} h={12}><path d="M1 1h14v10H1zM8 1v10" strokeWidth="1.300" /></Icon></button>
    <Gap $w={6} />
    <Icon w={11} h={11} color="#777"><path d="M10 1v10M8 3v8M6 5v6M4 7v4M2 9v2" strokeDasharray="1 1" /></Icon>
    <Gap $w={1} />
  </Status>
);

const Document = () => (
  <Main>
    <Tabs>
      <Tab>
        62%
        <Cross color="#f2f2f2" />
      </Tab>
    </Tabs>
    <Stage>
      <Sheet>
        <RulerX>
          {unitsX.map((n, i) => (
            <UnitX key={i}>
              <MarkX>{n}</MarkX>
              {ticks.map((t) => <TickX key={t} $long={t === 4} />)}
            </UnitX>
          ))}
        </RulerX>
        <Lower>
          <RulerY>
            {unitsY.map((n) => (
              <UnitY key={n}>
                <MarkY>{n}</MarkY>
                {ticks.map((t) => <TickY key={t} $long={t === 4} />)}
              </UnitY>
            ))}
          </RulerY>
          <Canvas><Page /></Canvas>
        </Lower>
      </Sheet>
      <ScrollY>
        <Chevron dir="up" color="#8d8d8d" />
        <Fill $n={76} />
        <ThumbY />
        <Fill $n={74} />
        <Chevron color="#8d8d8d" />
      </ScrollY>
    </Stage>
    <StatusBar />
  </Main>
);

const DockPanel = () => (
  <Dock>
    <DockHead><DoubleLeft /></DockHead>
    {dockGroups.map((g, i) => (
      <DockGroup key={i}>
        <Grip $h={9} />
        {g.map((d) => (
          <DockItem key={d.name}>{d.icon}{d.name}</DockItem>
        ))}
      </DockGroup>
    ))}
  </Dock>
);

const WindowsBar = () => (
  <Taskbar>
    <StartButton aria-label="시작">
      <Icon w={16} h={16} color="#000"><path d="M0 2.300L6.500 1.400v6.100H0zM7.500 1.200L16 0v7.500H7.500zM0 8.500h6.500v6.100L0 13.700zM7.500 8.500H16V16l-8.500-1.200z" {...solid} /></Icon>
    </StartButton>
    <TaskSearch>
      <Icon w={17} h={17} color="#222"><circle cx="10.500" cy="6" r="5" strokeWidth="1.300" /><path d="M7 9.500L1 16" strokeWidth="1.300" /></Icon>
      <input placeholder="검색하려면 여기에 입력하십시오." aria-label="검색" />
    </TaskSearch>
    <Apps>
      {apps.map((a) => (
        <AppButton key={a.name} $line={a.line} $on={a.on} aria-label={a.name}>{a.icon}</AppButton>
      ))}
    </Apps>
    <Weather>
      <Icon w={24} h={24}><defs><linearGradient id="moon" x2="0" y2="1"><stop stopColor="#fcc944" /><stop offset="1" stopColor="#ee7d1b" /></linearGradient></defs><path d="M17 1c9 9 3 22-7 22-5 0-8-3-10-7 9 2 18-4 17-15z" fill="url(#moon)" stroke="none" /><circle cx="20.500" cy="3.500" r="3" fill="#c4302b" stroke="none" /></Icon>
      <span>7°C</span>
      <span>맑음</span>
    </Weather>
    <Tray>
      <Icon w={12} h={8} color="#222"><path d="M.5 7L6 1.500 11.500 7" strokeWidth="1.500" /></Icon>
      <Bandicam size={16} />
      <Icon w={12} h={16} color="#222"><rect x="1" y="4.500" width="7" height="7" rx="1.500" strokeWidth="1.300" /><path d="M8 7l3-1.500v5L8 9M1.500 2q3-2 6 0M1.500 14q3 2 6 0" strokeWidth="1.200" /></Icon>
      <Icon w={16} h={14} color="#222"><path d="M5 2h10.500v8H4V6M7 13.500h6M10 10v3" strokeWidth="1.200" /><path d="M.5.5h4v4h-4zM2.500 5v5" /></Icon>
      <Icon w={16} h={14} color="#222"><path d="M.7 5h2.500L7 1.500v11L3.200 9H.7zM9 5q1.500 2 0 4M11 3q3 4 0 8M13 1q4.500 6 0 12" strokeWidth="1.200" /></Icon>
      <Icon w={16} h={16} color="#8c8681"><circle cx="8" cy="8" r="7.300" fill="#e9e4d8" /><path d="M5 5l6 6M11 5l-6 6" strokeWidth="2.200" /></Icon>
    </Tray>
    <Clock>
      오후 9:52
      <br />
      2022-11-24
    </Clock>
    <button aria-label="알림">
      <Icon w={16} h={16} color="#000"><path d="M0 0h16v13h-5l-3 3-3-3H0z" {...solid} /><path d="M3 3.500h10M3 6.500h10M3 9.500h6" stroke="#e9ddd6" /></Icon>
    </button>
    <EdgeLine />
  </Taskbar>
);

export default function App() {
  return (
    <Screen>
      <Global />
      <TopMenu />
      <Controls />
      <Work>
        <Document />
        <ToolsPanel />
        <DockPanel />
      </Work>
      <WindowsBar />
    </Screen>
  );
}
